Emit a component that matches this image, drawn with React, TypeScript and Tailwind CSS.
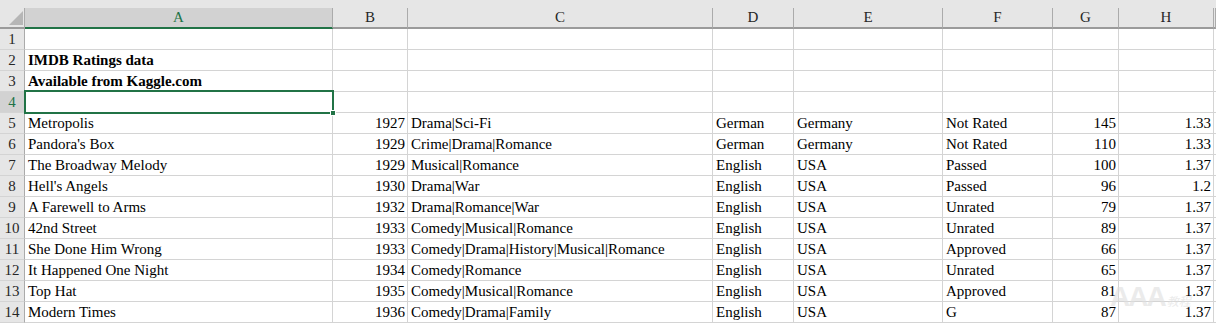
import React from 'react';

const cols = ['A', 'B', 'C', 'D', 'E', 'F', 'G', 'H', ''];

const rows: string[][] = [
  ['', '', '', '', '', '', '', ''],
  ['IMDB Ratings data', '', '', '', '', '', '', ''],
  ['Available from Kaggle.com', '', '', '', '', '', '', ''],
  ['', '', '', '', '', '', '', ''],
  ['Metropolis', '1927', 'Drama|Sci-Fi', 'German', 'Germany', 'Not Rated', '145', '1.33'],
  ["Pandora's Box", '1929', 'Crime|Drama|Romance', 'German', 'Germany', 'Not Rated', '110', '1.33'],
  ['The Broadway Melody', '1929', 'Musical|Romance', 'English', 'USA', 'Passed', '100', '1.37'],
  ["Hell's Angels", '1930', 'Drama|War', 'English', 'USA', 'Passed', '96', '1.2'],
  ['A Farewell to Arms', '1932', 'Drama|Romance|War', 'English', 'USA', 'Unrated', '79', '1.37'],
  ['42nd Street', '1933', 'Comedy|Musical|Romance', 'English', 'USA', 'Unrated', '89', '1.37'],
  ['She Done Him Wrong', '1933', 'Comedy|Drama|History|Musical|Romance', 'English', 'USA', 'Approved', '66', '1.37'],
  ['It Happened One Night', '1934', 'Comedy|Romance', 'English', 'USA', 'Unrated', '65', '1.37'],
  ['Top Hat', '1935', 'Comedy|Musical|Romance', 'English', 'USA', 'Approved', '81', '1.37'],
  ['Modern Times', '1936', 'Comedy|Drama|Family', 'English', 'USA', 'G', '87', '1.37'],
];

// columns B, G, H hold numbers -> right aligned
const numeric = [false, true, false, false, false, false, true, true];

function App() {
  return (
    <div className="relative w-[1216px] h-[323px] overflow-hidden bg-white text-black">
      {/* top strip */}
      <div className="h-[8px] bg-[#e6e6e6]" />

      <div className="grid grid-cols-[25px_308px_75px_305px_81px_149px_110px_66px_95px_1fr]">
        {/* corner */}
        <div className="relative h-[21px] bg-[#e6e6e6] border-r border-[#ababab] border-b-2 border-b-[#9b9b9b]">
          <svg className="absolute left-[9px] top-[3px]" width="14" height="14" viewBox="0 0 14 14">
            <polygon points="14,0 14,14 0,14" fill="#b6b6b6" />
          </svg>
        </div>
        {/* column headers */}
        {cols.map((c, i) => (
          <div
            key={c + i}
            className={
              "h-[21px] border-r border-[#ababab] border-b-2 flex items-center justify-center leading-[19px] font-['Liberation_Serif',serif] text-[15px] " +
              (i === 0
                ? 'bg-[#d2d2d2] border-b-[#217346] text-[#217346]'
                : 'bg-[#e6e6e6] border-b-[#9b9b9b] text-[#262626]')
            }
          >
            {c}
          </div>
        ))}

        {rows.map((r, ri) => (
          <React.Fragment key={ri}>
            <div
              className={
                "h-[21px] border-r border-[#ababab] border-b border-b-[#d4d4d4] text-center leading-[21px] font-['Liberation_Serif',serif] text-[15px] " +
                (ri === 3 ? 'bg-[#d2d2d2] text-[#217346] border-r-[#217346]' : 'bg-[#e6e6e6] text-[#262626]')
              }
            >
              {ri + 1}
            </div>
            {r.map((v, ci) => (
              <div
                key={ci}
                className={
                  "h-[21px] border-r border-b border-[#d4d4d4] leading-[21px] whitespace-nowrap font-['Liberation_Serif',serif] text-[15px] " +
                  (numeric[ci] ? 'text-right pr-[2px] overflow-hidden' : 'pl-[3px]') +
                  (ri === 1 || ri === 2 ? ' font-bold' : '')
                }
              >
                {v}
              </div>
            ))}
            <div className="h-[21px] border-b border-[#d4d4d4]" />
          </React.Fragment>
        ))}
      </div>

      {/* active cell A4 */}
      <div className="absolute left-[24px] top-[90px] w-[310px] h-[24px] border-2 border-[#217346] pointer-events-none" />
      <div className="absolute left-[330px] top-[110px] w-[6px] h-[6px] bg-[#217346] border border-white" />

      {/* faint watermark */}
      <div className="absolute left-[1110px] top-[282px] flex items-end gap-[2px] pointer-events-none opacity-60">
        <span className="font-['Liberation_Sans',sans-serif] font-bold text-[28px] leading-[30px] text-[#dedede] tracking-[-2px]">AAA</span>
        <span className="font-['Noto_Sans_CJK_SC',sans-serif] text-[12px] leading-[22px] text-[#dedede] italic">教程</span>
      </div>
    </div>
  );
}

export default App;
